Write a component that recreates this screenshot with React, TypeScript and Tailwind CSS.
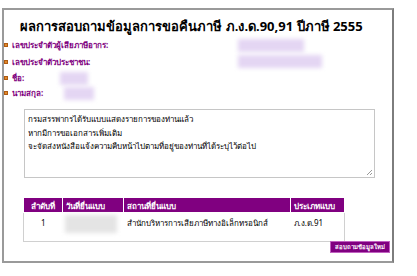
const font = { fontFamily: 'Tahoma, "Noto Sans", "DejaVu Sans", sans-serif' };

const Bullet = () => <span className="inline-block w-[4px] h-[4px] bg-[#e08a2a] border border-[#b05a10] mr-[4px] shrink-0" />;

const Blur = ({ className }: { className: string }) => (
  <div className={`bg-[#e4d6f3] blur-[2px] ${className}`} />
);

export default function App() {
  return (
    <div className="w-[417px] h-[276px] bg-white pt-[8px] pl-[2px] overflow-hidden" style={font}>
      <div className="w-[392px] h-[255px] border-2 border-[#9a9a9a] border-r-[#7d7d7d] bg-white">
        <div className="flex justify-center pt-[6px] pr-[13px]">
          <h1 className="text-[13px] font-bold text-black leading-[20px] whitespace-nowrap">
            ผลการสอบถามข้อมูลการขอคืนภาษี ภ.ง.ด.90,91 ปีภาษี 2555
          </h1>
        </div>

        <div className="flex items-center h-[16px] mt-[1px] text-[8px] font-bold text-[#800080] whitespace-nowrap">
          <Bullet />
          <span className="w-[226px]">เลขประจำตัวผู้เสียภาษีอากร:</span>
          <Blur className="w-[66px] h-[13px]" />
        </div>
        <div className="flex items-center h-[17px] text-[8px] font-bold text-[#800080] whitespace-nowrap">
          <Bullet />
          <span className="w-[226px]">เลขประจำตัวประชาชน:</span>
          <Blur className="w-[84px] h-[13px]" />
        </div>
        <div className="flex items-center h-[16px] text-[8px] font-bold text-[#800080] whitespace-nowrap">
          <Bullet />
          <span className="w-[48px]">ชื่อ:</span>
          <Blur className="w-[28px] h-[13px]" />
        </div>
        <div className="flex items-center h-[14px] text-[8px] font-bold text-[#800080] whitespace-nowrap">
          <Bullet />
          <span className="w-[52px]">นามสกุล:</span>
          <Blur className="w-[30px] h-[13px]" />
        </div>

        <div className="ml-[20px] mt-[9px] w-[351px] h-[69px] border border-[#c6c6c6] relative px-[3px] pt-[2px] text-[8px] leading-[13.5px] text-black whitespace-nowrap">
          <div>กรมสรรพากรได้รับแบบแสดงรายการของท่านแล้ว</div>
          <div>หากมีการขอเอกสารเพิ่มเติม</div>
          <div>จะจัดส่งหนังสือแจ้งความคืบหน้าไปตามที่อยู่ของท่านที่ได้ระบุไว้ต่อไป</div>
          <svg className="absolute right-[1px] bottom-[1px]" width="7" height="7" viewBox="0 0 7 7">
            <path d="M6 1 L1 6 M6 4 L4 6" stroke="#9a9a9a" strokeWidth="1" />
          </svg>
        </div>

        <table className="ml-[19px] mt-[19px] w-[322px] table-fixed border border-[#d0d0d0] border-collapse text-[8px] whitespace-nowrap">
          <thead>
            <tr className="bg-[#800080] text-white h-[15px] leading-[13px]">
              <th className="w-[39px] border border-white text-center font-bold">ลำดับที่</th>
              <th className="w-[61px] border border-white text-left pl-[3px] font-bold">วันที่ยื่นแบบ</th>
              <th className="w-[167px] border border-white text-left pl-[3px] font-bold">สถานที่ยื่นแบบ</th>
              <th className="border border-white text-left pl-[3px] font-bold">ประเภทแบบ</th>
            </tr>
          </thead>
          <tbody>
            <tr className="h-[29px] text-black align-top">
              <td className="text-center pt-[4px]">1</td>
              <td className="pt-[2px]">
                <Blur className="w-[52px] h-[18px] ml-[2px] bg-[#e4e4e4]" />
              </td>
              <td className="pl-[3px] pt-[4px]">สำนักบริหารการเสียภาษีทางอิเล็กทรอนิกส์</td>
              <td className="pl-[3px] pt-[4px]">ภ.ง.ด.91</td>
            </tr>
          </tbody>
        </table>

        <div className="flex justify-end pr-[2px] -mt-[1px]">
          <button className="bg-[#800080] border border-[#c060c0] text-white text-[6px] font-bold h-[12px] px-[4px] leading-[10px] whitespace-nowrap">
            สอบถามข้อมูลใหม่
          </button>
        </div>
      </div>
    </div>
  );
}
